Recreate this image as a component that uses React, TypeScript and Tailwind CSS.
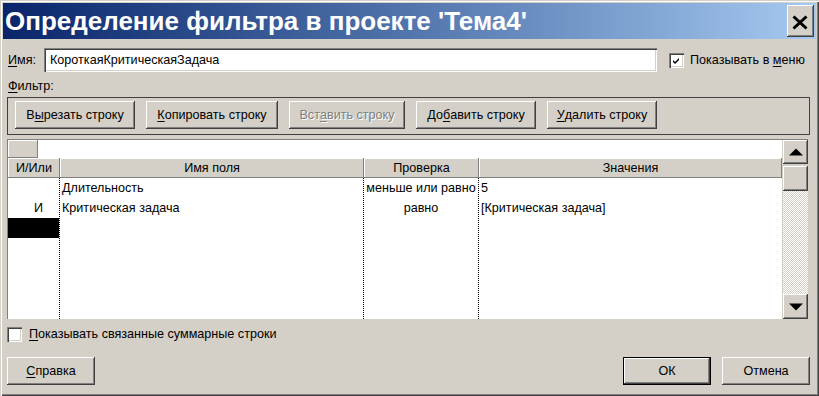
import React from "react";

const raised =
  "bg-[#d4d0c8] shadow-[inset_-1px_-1px_0_#404040,inset_1px_1px_0_#ffffff,inset_-2px_-2px_0_#808080]";
const raisedDefault =
  "bg-[#d4d0c8] shadow-[inset_0_0_0_1px_#000000,inset_-2px_-2px_0_#404040,inset_2px_2px_0_#ffffff,inset_-3px_-3px_0_#808080]";
const sunken =
  "bg-white shadow-[inset_1px_1px_0_#808080,inset_2px_2px_0_#404040,inset_-1px_-1px_0_#ffffff,inset_-2px_-2px_0_#d4d0c8]";
const headerCell =
  "bg-[#d4d0c8] shadow-[inset_-1px_-1px_0_#808080,inset_1px_1px_0_#ffffff]";

function U({ children }: { children: React.ReactNode }) {
  return <span className="underline underline-offset-[2px] decoration-1">{children}</span>;
}

function Btn({
  w,
  children,
  disabled,
  def,
}: {
  w: string;
  children: React.ReactNode;
  disabled?: boolean;
  def?: boolean;
}) {
  return (
    <div
      className={`${w} h-[28px] flex items-center justify-center leading-none whitespace-nowrap ${
        def ? raisedDefault : raised
      } ${disabled ? "text-[#808080] [text-shadow:1px_1px_0_#ffffff]" : "text-black"}`}
    >
      {children}
    </div>
  );
}

function Check({ checked }: { checked?: boolean }) {
  return (
    <div className={`w-[15px] h-[15px] shrink-0 ${sunken} flex items-center justify-center`}>
      {checked && (
        <svg width="15" height="15" viewBox="0 0 15 15">
          <path d="M4 7 L6 9 L10 5 L10 7 L6 11 L4 9 Z" fill="#000" />
        </svg>
      )}
    </div>
  );
}

export default function App() {
  return (
    <div className="w-[819px] h-[396px] bg-[#d4d0c8] p-[3px] flex flex-col font-['Liberation_Sans',Arial,sans-serif] text-[12.6px] text-black shadow-[inset_1px_1px_0_#d4d0c8,inset_2px_2px_0_#ffffff,inset_-1px_-1px_0_#404040,inset_-2px_-2px_0_#808080] overflow-hidden">
      {/* Title bar */}
      <div className="h-[36px] shrink-0 flex items-center justify-between bg-linear-to-r from-[#0a246a] to-[#a6caf0] pl-[2px] pr-[2px]">
        <div className="text-[26px] font-bold text-white leading-none whitespace-nowrap">
          Определение фильтра в проекте 'Тема4'
        </div>
        <div className={`w-[27px] h-[32px] ${raised} flex items-center justify-center`}>
          <svg width="27" height="32" viewBox="0 0 27 32">
            <path d="M6.5 11.5 L19.5 23.5 M19.5 11.5 L6.5 23.5" stroke="#000" strokeWidth="3" />
          </svg>
        </div>
      </div>

      {/* Content */}
      <div className="flex-1 flex flex-col pl-[4px] pr-[6px]">
        {/* Name row */}
        <div className="mt-[9px] h-[24px] flex items-center">
          <div className="w-[37px] pl-[1px] leading-none">
            <U>И</U>мя:
          </div>
          <div className={`w-[613px] h-[24px] ${sunken} flex items-center pl-[6px] leading-none`}>
            КороткаяКритическаяЗадача
          </div>
          <div className="ml-[12px]">
            <Check checked />
          </div>
          <div className="ml-[6px] leading-none whitespace-nowrap">
            Показывать в <U>м</U>еню
          </div>
        </div>

        {/* Filter label */}
        <div className="mt-[6px] h-[16px] flex items-center pl-[1px] leading-none">
          <U>Ф</U>ильтр:
        </div>

        {/* Button group */}
        <div className="mt-[3px] h-[38px] w-[803px] border border-[#404040] flex items-start pt-[3px] pl-[7px] gap-[11px]">
          <Btn w="w-[120px]">
            В<U>ы</U>резать строку
          </Btn>
          <Btn w="w-[132px]">
            <U>К</U>опировать строку
          </Btn>
          <Btn w="w-[116px]" disabled>
            Вст<U>а</U>вить строку
          </Btn>
          <Btn w="w-[120px]">
            До<U>б</U>авить строку
          </Btn>
          <Btn w="w-[110px]">
            <U>У</U>далить строку
          </Btn>
        </div>

        {/* Grid */}
        <div className="mt-[4px] h-[180px] w-[801px] flex border-l border-t border-[#808080]">
          <div className="w-[774px] flex flex-col bg-white">
            <div className="h-[18px] flex shrink-0">
              <div className={`w-[30px] h-full ${headerCell}`} />
              <div className="flex-1 bg-white" />
            </div>
            <div className="h-[20px] flex shrink-0 leading-none">
              <div className={`w-[52px] h-full ${headerCell} flex items-center justify-center`}>И/Или</div>
              <div className={`w-[304px] h-full ${headerCell} flex items-center justify-center`}>Имя поля</div>
              <div className={`w-[115px] h-full ${headerCell} flex items-center justify-center`}>Проверка</div>
              <div className={`w-[303px] h-full ${headerCell} flex items-center justify-center`}>Значения</div>
            </div>
            <div className="flex-1 flex leading-none">
              <div className="w-[52px] h-full border-r border-dotted border-black flex flex-col">
                <div className="h-[20px]" />
                <div className="h-[20px] flex items-center justify-end pr-[16px]">И</div>
                <div className="h-[20px] bg-black" />
              </div>
              <div className="w-[304px] h-full border-r border-dotted border-black flex flex-col pl-[2px]">
                <div className="h-[20px] flex items-center">Длительность</div>
                <div className="h-[20px] flex items-center">Критическая задача</div>
              </div>
              <div className="w-[115px] h-full border-r border-dotted border-black flex flex-col">
                <div className="h-[20px] flex items-center justify-center whitespace-nowrap">меньше или равно</div>
                <div className="h-[20px] flex items-center justify-center">равно</div>
              </div>
              <div className="w-[303px] h-full flex flex-col pl-[2px]">
                <div className="h-[20px] flex items-center">5</div>
                <div className="h-[20px] flex items-center">[Критическая задача]</div>
              </div>
            </div>
          </div>
          {/* Scrollbar */}
          <div className="w-[26px] h-full flex flex-col pl-[1px] bg-[#d4d0c8]">
            <div className={`h-[24px] w-[25px] shrink-0 ${raised} flex items-center justify-center`}>
              <svg width="14" height="8" viewBox="0 0 14 8">
                <path d="M0 7.5 L7 0.5 L14 7.5 Z" fill="#000" />
              </svg>
            </div>
            <div className={`mt-[2px] h-[25px] w-[25px] shrink-0 ${raised}`} />
            <div className="flex-1 w-[25px] [background-image:repeating-conic-gradient(#d4d0c8_0_25%,#ffffff_0_50%)] [background-size:2px_2px]" />
            <div className={`h-[25px] w-[25px] shrink-0 ${raised} flex items-center justify-center`}>
              <svg width="14" height="8" viewBox="0 0 14 8">
                <path d="M0 0.5 L14 0.5 L7 7.5 Z" fill="#000" />
              </svg>
            </div>
          </div>
        </div>

        {/* Bottom checkbox */}
        <div className="mt-[8px] h-[15px] flex items-center">
          <Check />
          <div className="ml-[7px] leading-none whitespace-nowrap">
            <U>П</U>оказывать связанные суммарные строки
          </div>
        </div>

        {/* Bottom buttons */}
        <div className="mt-[15px] flex justify-between">
          <Btn w="w-[88px]">
            <U>С</U>правка
          </Btn>
          <div className="flex gap-[11px]">
            <Btn w="w-[88px]" def>
              ОК
            </Btn>
            <Btn w="w-[88px]">Отмена</Btn>
          </div>
        </div>
      </div>
    </div>
  );
}
